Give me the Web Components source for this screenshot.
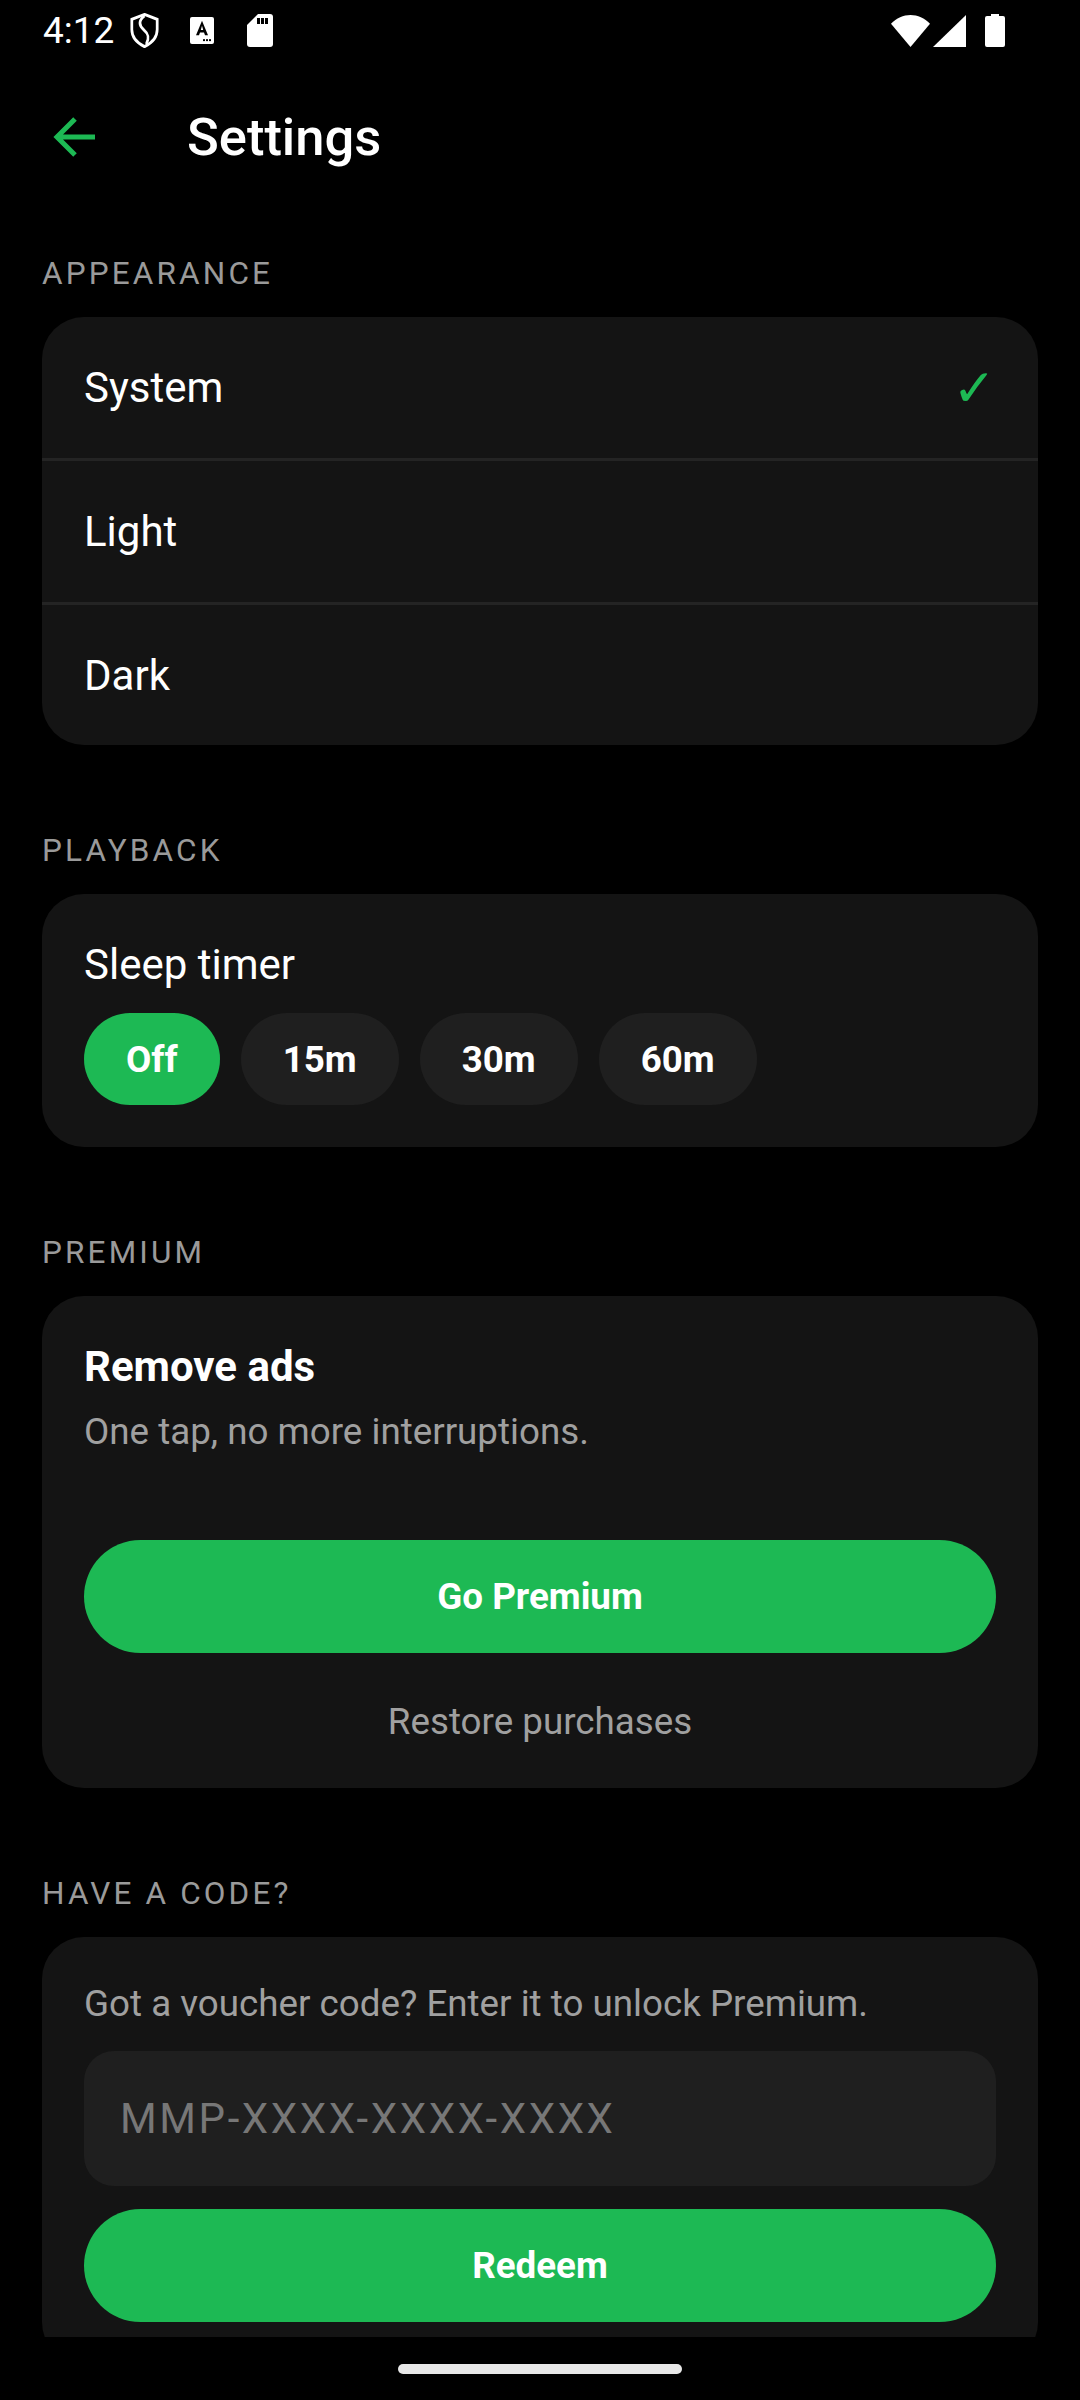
<!DOCTYPE html>
<html>
<head>
<meta charset="utf-8">
<title>Settings</title>
<style>
  html, body { margin: 0; padding: 0; background: #000; }
  body { font-family: Roboto, "Liberation Sans", sans-serif; color: #fff; width: 1080px; height: 2400px; overflow: hidden; }
</style>
</head>
<body>
<app-shell>
  <status-bar slot="status"></status-bar>
  <top-bar slot="top" title="Settings"></top-bar>

  <settings-section label="APPEARANCE">
    <settings-card flush>
      <option-row selected>System</option-row>
      <option-row>Light</option-row>
      <option-row last>Dark</option-row>
    </settings-card>
  </settings-section>

  <settings-section label="PLAYBACK">
    <settings-card>
      <timer-picker>
        <timer-chip active>Off</timer-chip>
        <timer-chip>15m</timer-chip>
        <timer-chip>30m</timer-chip>
        <timer-chip>60m</timer-chip>
      </timer-picker>
    </settings-card>
  </settings-section>

  <settings-section label="PREMIUM">
    <settings-card>
      <premium-panel></premium-panel>
    </settings-card>
  </settings-section>

  <settings-section label="HAVE A CODE?">
    <settings-card>
      <voucher-form></voucher-form>
    </settings-card>
  </settings-section>
</app-shell>

<script>
// tiny helper so every element below stays short
function define(name, html, setup) {
  customElements.define(name, class extends HTMLElement {
    constructor() {
      super();
      this._root = this.attachShadow({ mode: 'open' });
    }
    connectedCallback() {
      this._root.innerHTML = html(this);
      if (setup) setup(this);
    }
  });
}

define('app-shell', () => `
  <style>
    :host { display: flex; flex-direction: column; width: 1080px; height: 2400px; background: #000; }
    .scroll { height: 2129px; overflow: hidden; padding: 45px 42px 0; box-sizing: border-box; }
    .nav { flex: 1; display: flex; justify-content: center; align-items: flex-start; padding-top: 27px; }
    .pill { width: 284px; height: 10px; border-radius: 5px; background: #e8e8e8; }
  </style>
  <slot name="status"></slot>
  <slot name="top"></slot>
  <div class="scroll"><slot></slot></div>
  <div class="nav"><div class="pill"></div></div>
`);

define('status-bar', () => `
  <style>
    :host { display: flex; align-items: center; height: 63px; box-sizing: border-box; padding: 0 0 2px 43px; color: #fff; }
    .time { font-size: 37px; width: 87px; }
    svg { display: block; fill: #fff; }
    .left { display: flex; align-items: center; }
    .right { margin-left: auto; margin-right: 75px; display: flex; align-items: center; }
  </style>
  <span class="time">4:12</span>
  <div class="left">
    <svg width="29" height="35" viewBox="0 0 32 36" preserveAspectRatio="none" style="margin-right:31px">
      <path d="M16 1.5 L30 6.5 V17 C30 25 24 31 16 34.5 C8 31 2 25 2 17 V6.5 Z" fill="none" stroke="#fff" stroke-width="3"/>
      <path d="M16 3 C9 8 10 13 15 17 C20 21 22 25 18 32" fill="none" stroke="#fff" stroke-width="3"/>
    </svg>
    <svg width="24" height="27" viewBox="0 0 24 28" preserveAspectRatio="none" style="margin-right:33px">
      <path d="M2 0H22a2 2 0 0 1 2 2V26a2 2 0 0 1-2 2H2a2 2 0 0 1-2-2V2a2 2 0 0 1 2-2Z"/>
      <path d="M12 4 L18 19 H15 L14 16 H10 L9 19 H6 Z M12 9 L10.8 13.5 H13.2 Z" fill="#000" fill-rule="evenodd"/>
      <rect x="13" y="23" width="2" height="2" fill="#000"/><rect x="16" y="23" width="2" height="2" fill="#000"/><rect x="19" y="23" width="2" height="2" fill="#000"/>
    </svg>
    <svg width="26" height="33" viewBox="0 0 26 33">
      <path d="M11 0H23a3 3 0 0 1 3 3V30a3 3 0 0 1-3 3H3a3 3 0 0 1-3-3V11Z"/>
      <rect x="14" y="4" width="3" height="6" fill="#000"/><rect x="18" y="4" width="3" height="6" fill="#000"/><rect x="10" y="4" width="3" height="6" fill="#000"/>
    </svg>
  </div>
  <div class="right">
    <svg width="39" height="32" viewBox="0 0 40 33" preserveAspectRatio="none" style="margin-right:3px"><path d="M0 9 C11 -3 29 -3 40 9 L20 33 Z"/></svg>
    <svg width="33" height="32" viewBox="0 0 33 33" preserveAspectRatio="none" style="margin-right:19px"><path d="M33 0 V33 H0 Z"/></svg>
    <svg width="20" height="33" viewBox="0 0 20 33"><path d="M6 0H14V2H18a2 2 0 0 1 2 2V31a2 2 0 0 1-2 2H2a2 2 0 0 1-2-2V4a2 2 0 0 1 2-2H6Z"/></svg>
  </div>
`);

define('top-bar', el => `
  <style>
    :host { display: flex; align-items: center; height: 145px; padding-left: 53px; box-sizing: border-box; }
    svg { display: block; margin-right: 92px; margin-top: 2px; }
    h1 { margin: 0; font: 500 52.5px/60px Roboto, sans-serif; color: #fff; padding-top: 3px; }
  </style>
  <svg width="42" height="42" viewBox="0 0 42 42" fill="none" stroke="#1db954" stroke-width="5">
    <path d="M42 21H4M22 3 L4 21 L22 39"/>
  </svg>
  <h1>${el.getAttribute('title')}</h1>
`);

define('settings-section', el => `
  <style>
    :host { display: block; margin-bottom: 85px; }
    .label { font: 400 31.5px/42px Roboto, sans-serif; letter-spacing: 3.15px; color: #9a9a9a; margin-bottom: 22px; }
  </style>
  <div class="label">${el.getAttribute('label')}</div>
  <slot></slot>
`);

define('settings-card', el => `
  <style>
    :host { display: block; background: #141414; border-radius: 42px; overflow: hidden; }
    .pad { padding: ${el.hasAttribute('flush') ? '0' : '42px'}; }
  </style>
  <div class="pad"><slot></slot></div>
`);

define('option-row', el => `
  <style>
    :host { display: flex; align-items: center; justify-content: space-between; height: ${el.hasAttribute('last') ? '140' : '141'}px; padding: 0 42px; font-size: 42px; color: #fff; border-bottom: ${el.hasAttribute('last') ? '0' : '3px solid #242424'}; }
    .check { color: #1db954; font: 52px/1 "DejaVu Sans", sans-serif; }
  </style>
  <slot></slot>
  ${el.hasAttribute('selected') ? '<span class="check">✓</span>' : ''}
`);

define('timer-picker', () => `
  <style>
    :host { display: block; }
    .title { font-size: 42px; line-height: 58px; margin-bottom: 19px; }
    .chips { display: flex; gap: 21px; }
  </style>
  <div class="title">Sleep timer</div>
  <div class="chips"><slot></slot></div>
`);

define('timer-chip', el => `
  <style>
    :host { display: flex; align-items: center; justify-content: center; height: 92px; padding: 0 42px; border-radius: 46px; font: 700 36.75px Roboto, sans-serif; color: #fff; background: ${el.hasAttribute('active') ? '#1db954' : '#1f1f1f'}; }
  </style>
  <slot></slot>
`);

define('pill-button', () => `
  <style>
    :host { display: flex; align-items: center; justify-content: center; height: 113px; border-radius: 57px; background: #1db954; color: #fff; font: 700 36.75px Roboto, sans-serif; }
  </style>
  <slot></slot>
`);

define('premium-panel', () => `
  <style>
    :host { display: block; }
    h2 { margin: 0; font: 700 42px/58px Roboto, sans-serif; color: #fff; }
    p { margin: 11px 0 0; font: 400 36.75px/50px Roboto, sans-serif; color: #a0a0a0; }
    pill-button { margin-top: 83px; }
    .restore { text-align: center; margin-top: 44px; margin-bottom: -1px; font: 400 36.75px/50px Roboto, sans-serif; color: #a0a0a0; }
  </style>
  <h2>Remove ads</h2>
  <p>One tap, no more interruptions.</p>
  <pill-button>Go Premium</pill-button>
  <div class="restore">Restore purchases</div>
`);

define('voucher-form', () => `
  <style>
    :host { display: block; }
    p { margin: 0; font: 400 36.75px/50px Roboto, sans-serif; color: #a0a0a0; }
    .field { display: flex; align-items: center; height: 135px; margin-top: 22px; padding: 0 36px; border-radius: 30px; background: #1f1f1f; font: 400 42px Roboto, sans-serif; letter-spacing: 2.6px; color: #777; }
    pill-button { margin-top: 23px; }
  </style>
  <p>Got a voucher code? Enter it to unlock Premium.</p>
  <div class="field">MMP-XXXX-XXXX-XXXX</div>
  <pill-button>Redeem</pill-button>
`);
</script>
</body>
</html>
